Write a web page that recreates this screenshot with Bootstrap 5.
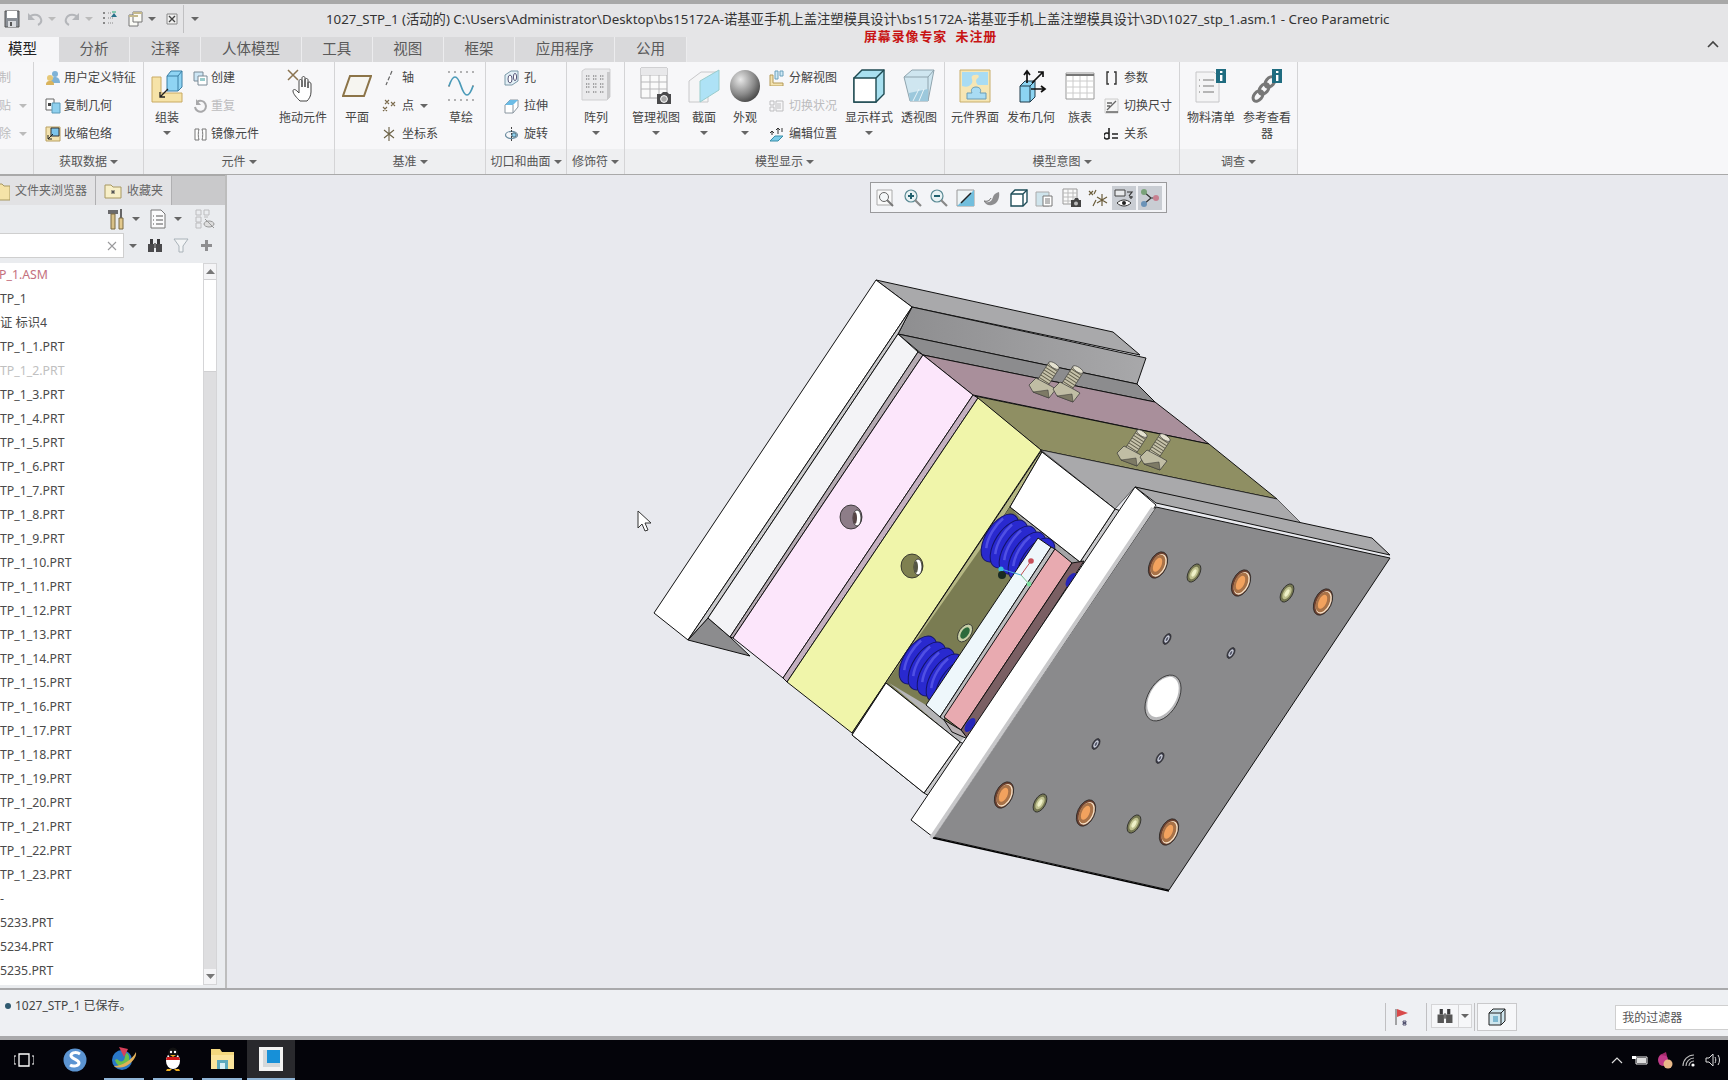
<!doctype html>
<html lang="zh-CN">
<head>
<meta charset="utf-8">
<title>Creo Parametric</title>
<link href="https://cdn.jsdelivr.net/npm/bootstrap@5.3.0/dist/css/bootstrap.min.css" rel="stylesheet">
<style>
html,body{height:1080px;margin:0;overflow:hidden}
body.crapp{width:1728px;font-family:"Noto Sans","Noto Sans CJK SC",sans-serif;font-size:12px;line-height:16px;color:#444;background:#e8e9ee}
svg{display:block;flex:none}
.stripe{height:4px;background:#a8a8a8}
.ttlbar{height:33px;background:#e5e5e7;padding-bottom:4px}
.qat{width:205px;padding-left:4px}
.ttltxt{margin-left:121px;font-size:13.3px;color:#333;white-space:nowrap}
.wmark{position:absolute;left:864px;top:28px;color:#c81414;font-weight:700;font-size:13px;line-height:16px;white-space:pre;z-index:3;letter-spacing:.85px}
.crt{display:inline-block;width:0;height:0;border-left:4px solid transparent;border-right:4px solid transparent;border-top:4px solid #666;flex:none}
.crt.lite{border-top-color:#bbb}
.tabrow{height:25px;background:#e5e5e7;position:relative}
.tabrow .nav-link{height:25px;padding:0 20.6px;font-size:14.5px;line-height:23px;color:#5a5a5a;background:#d9d9db;border-right:1px solid #ececee;border-radius:0}
.tabrow .nav-link.active{background:#f6f6f8;color:#222;padding:0 22px 0 8px;border-right:0}
.collapse-ch{position:absolute;right:9px;top:3px}
.ribbon{height:113px;background:#f7f7f9;border-bottom:1px solid #a9a9a9}
.rgrp{display:flex;flex-direction:column;border-right:1px solid #d4d4d6;height:112px;flex:none;overflow:hidden}
.rbody{height:87px;display:flex;align-items:flex-start}
.rfoot{height:25px;background:#eeeff1;text-align:center;line-height:25px;color:#555;display:flex;align-items:center;justify-content:center;gap:3px;white-space:nowrap}
.g0{width:34px}.g1{width:110px}.g2{width:191px}.g3{width:151px}.g4{width:81px}.g5{width:58px}.g6{width:320px}.g7{width:235px}.g8{width:118px}
.pl11{padding-left:11px}.pl18{padding-left:18px}
.bbtn{height:87px;padding-top:4px;display:flex;flex-direction:column;align-items:center;text-align:center;flex:none}
.bico{height:39px;display:flex;align-items:center;justify-content:center;width:100%}
.blab{margin-top:5px;line-height:16px;color:#444}
.bbtn .crt{margin-top:5px}
.wd34{width:34px}.wd44{width:44px}.wd46{width:46px}.wd48{width:48px}.wd50{width:50px}.wd52{width:52px}.wd56{width:56px}.wd58{width:58px}.wd60{width:60px}.wd62{width:62px}
.scol{display:flex;flex-direction:column;flex:none;padding-top:2px}
.srow{height:28px;display:flex;align-items:center;gap:3px;white-space:nowrap;color:#444}
.srow.off{color:#bcbcbe}
.gp5{gap:5px}.gp6{gap:6px}
.cw81{width:81px;margin-left:3px}.cw57{width:57px;margin-left:3px}.cw72{width:72px}.cw60{width:60px;margin-left:1px}.cw30{width:33px;margin-left:-1px}
.mainrow{height:813px}
.lpanel{width:227px;background:#eaecef;border-right:2px solid #bdbdbd;flex:none;display:flex;flex-direction:column}
.ptabs{height:30px;background:#c9c9cb;border-top:1px solid #a9a9a9}
.ptab{height:29px;background:#e2e2e4;border-right:1px solid #b0b0b2;display:flex;align-items:center;gap:5px;white-space:nowrap;color:#666}
.ptab.a{width:96px;justify-content:flex-end;padding-right:8px}
.ptab.b{width:76px;padding-left:8px}
.ptool{height:28px;padding-right:10px}
.psrch{height:30px;padding-bottom:5px}
.srchbox{width:124px;height:25px;background:#fff;border:1px solid #cfcfcf;border-left:0;display:flex;align-items:center;justify-content:flex-end;padding-right:6px;border-radius:0}
.ms5{margin-left:5px}.ms7{margin-left:7px}.ms8{margin-left:8px}.ms9{margin-left:9px}.ms10{margin-left:10px}.ms12{margin-left:12px}.ms13{margin-left:13px}
.plist{height:722px;margin-right:10px}
.tree{width:203px;background:#fff;overflow:hidden;flex:none;border-radius:0}
.tree .list-group-item{padding:0;border:0;background:transparent;font-size:12.3px;line-height:24px;height:24px;color:#4a4a4a;white-space:nowrap;border-radius:0}
.tree .list-group-item.rd{color:#c4707e;margin-left:-1px}
.tree .list-group-item.dim{color:#c0c0c0}
.sbar{width:14px;flex:none;display:flex;flex-direction:column;border:1px solid #d5d5d7;background:#dedee0}
.sbtn{height:15px;background:#f4f4f6;display:flex;align-items:center;justify-content:center;flex:none}
.sthumb{height:93px;background:#fff;border-top:1px solid #d0d0d2;border-bottom:1px solid #d0d0d2;flex:none}
.cvs{flex:1 1 auto;position:relative;background:#e8e9ee;overflow:hidden}
.ftool{position:absolute;left:643px;top:7px;width:297px;height:31px;background:#f3f4f7;border:1px solid #9a9a9c;display:flex;align-items:center;padding-left:2px}
.fbtn{width:26.5px;height:24px;display:flex;align-items:center;justify-content:center;flex:none}
.fbtn.on{background:#c9cdd3;width:24px;margin-right:2.5px}
.stbar{height:48px;background:#eef0f3;border-top:2px solid #a9a9ab;padding-top:8px}
.stmsg{padding-left:5px;gap:4px;width:1387px;height:32px;color:#444;white-space:nowrap;margin-top:-8px;align-self:flex-start}
.stdot{width:6px;height:6px;background:#2f5a70;border-radius:50%}
.stsep{width:1px;height:28px;background:#c0c0c2;flex:none}
.flag{width:40px;padding-left:9px;height:30px}
.bnbox{width:41px;height:24px;border:1px solid #d5d5d7;background:#f6f7f9;margin:0 2px 3px 4px;display:flex;align-items:center}
.bnl{width:27px;border-right:1px solid #d5d5d7;height:22px;display:flex;align-items:center;justify-content:center}
.bnr{width:12px;display:flex;justify-content:center}
.cubebox{width:40px;height:28px;border:1px solid #c9c9cb;background:#f6f7f9;margin-left:2px;display:flex;align-items:center;justify-content:center}
.fltbox{width:113px;height:25px;background:#fff;border:1px solid #cfcfcf;border-right:0;margin-left:98px;padding-left:6px;line-height:23px;color:#555;border-radius:0}
.ggap{height:4px;background:#a9a9ab}
.taskb{height:40px;background:#04040a}
.tki{height:40px;width:40px;display:flex;align-items:center;justify-content:center;flex:none}
.tki.u{border-bottom:2px solid #8fb4d6}
.tki.wide{width:48px}
.tki.act{background:#29292d;border-bottom:2px solid #8fb4d6;width:48px}
.tray{gap:9px;padding-right:7px}
</style>
</head>
<body class="crapp d-flex flex-column position-relative">
<div class="stripe"></div>
<div class="ttlbar d-flex align-items-center">
  <div class="qat d-flex align-items-center">
    <svg width="16" height="18" viewBox="0 0 16 18"><path d="M1 1h14v16H1z" fill="#8a8f96" stroke="#555"/><path d="M3 1h10v7H3z" fill="#fff"/><path d="M4 11h8v6H4z" fill="#d8dade"/><path d="M6 12h2v4H6z" fill="#555"/></svg>
    <svg class="ms7" width="16" height="14" viewBox="0 0 16 14"><path d="M2 6c2-4 10-5 12 1 1 3-1 5-3 6" fill="none" stroke="#b4b6ba" stroke-width="2"/><path d="M1 1v7h7z" fill="#b4b6ba"/></svg>
    <span class="crt lite ms5"></span>
    <svg class="ms8" width="16" height="14" viewBox="0 0 16 14"><path d="M14 6c-2-4-10-5-12 1-1 3 1 5 3 6" fill="none" stroke="#b4b6ba" stroke-width="2"/><path d="M15 1v7H8z" fill="#b4b6ba"/></svg>
    <span class="crt lite ms5"></span>
    <svg class="ms9" width="16" height="18" viewBox="0 0 16 18"><path d="M1 3h3M1 8h3M1 13h3" stroke="#888" stroke-width="2" stroke-dasharray="2 1"/><path d="M6 3h4M6 8h6M6 13h6" stroke="#888" stroke-dasharray="1 1"/><path d="M9 7l3-4 3 4z" fill="#27708a"/><path d="M10 2h4" stroke="#2a7"/></svg>
    <svg class="ms10" width="15" height="16" viewBox="0 0 15 16"><path d="M1 4h9v11H1z" fill="#fbfbf6" stroke="#777"/><path d="M5 1h9v10H5z" fill="#fbfbf6" stroke="#777"/><path d="M5 1h9v2H5zM1 4h9v2H1z" fill="#c5b98c"/></svg>
    <span class="crt ms5"></span>
    <svg class="ms10" width="12" height="13" viewBox="0 0 12 13"><path d="M1 2h10v10H1z" fill="#f1f1f1" stroke="#888"/><path d="M3 4l6 6M9 4l-6 6" stroke="#444" stroke-width="1.4"/></svg>
    <div class="stsep ms5"></div>
    <span class="crt ms7"></span>
  </div>
  <div class="ttltxt">1027_STP_1 (活动的) C:\Users\Administrator\Desktop\bs15172A-诺基亚手机上盖注塑模具设计\bs15172A-诺基亚手机上盖注塑模具设计\3D\1027_stp_1.asm.1 - Creo Parametric</div>
</div>
<div class="wmark">屏幕录像专家  未注册</div>
<div class="tabrow">
  <ul class="nav">
    <li class="nav-item"><a class="nav-link active" href="#">模型</a></li>
    <li class="nav-item"><a class="nav-link" href="#">分析</a></li>
    <li class="nav-item"><a class="nav-link" href="#">注释</a></li>
    <li class="nav-item"><a class="nav-link" href="#">人体模型</a></li>
    <li class="nav-item"><a class="nav-link" href="#">工具</a></li>
    <li class="nav-item"><a class="nav-link" href="#">视图</a></li>
    <li class="nav-item"><a class="nav-link" href="#">框架</a></li>
    <li class="nav-item"><a class="nav-link" href="#">应用程序</a></li>
    <li class="nav-item"><a class="nav-link" href="#">公用</a></li>
  </ul>
  <svg class="collapse-ch" width="12" height="8" viewBox="0 0 12 8"><path d="M1 7l5-5 5 5" fill="none" stroke="#444" stroke-width="1.6"/></svg>
</div>
<div class="ribbon d-flex">
  <div class="rgrp g0">
    <div class="rbody"><div class="cw30 scol">
      <div class="srow off">制</div>
      <div class="srow off">贴 <span class="crt lite ms5"></span></div>
      <div class="srow off">除 <span class="crt lite ms5"></span></div>
    </div></div>
    <div class="rfoot"></div>
  </div>
  <div class="rgrp g1">
    <div class="rbody pl11"><div class="scol">
      <div class="srow"><svg width="16" height="16" viewBox="0 0 16 16"><circle cx="10" cy="4" r="3" fill="#7fb2d6"/><path d="M5 13c0-4 2-6 5-6s5 2 5 6z" fill="#7fb2d6"/><circle cx="5" cy="8" r="3" fill="#e6c878"/><path d="M1 15c0-3 1-4 4-4s4 1 4 4z" fill="#d9b35c"/></svg>用户定义特征</div>
      <div class="srow"><svg width="16" height="16" viewBox="0 0 16 16"><path d="M1 1h8v11H1z" fill="#fff" stroke="#666"/><path d="M7 5h8v10H7z" fill="#8fd0ee" stroke="#5a9ab8"/><path d="M3 5h3v3H3z" fill="#444"/></svg>复制几何</div>
      <div class="srow"><svg width="16" height="16" viewBox="0 0 16 16"><path d="M1 1h14v14H1z" fill="#f3e3b0" stroke="#b9a060"/><path d="M6 2h8v8H6z" fill="#7cc4ea" stroke="#333"/><path d="M3 13l5-5M3 9v4h4" stroke="#222" fill="none"/></svg>收缩包络</div>
    </div></div>
    <div class="rfoot">获取数据<span class="crt"></span></div>
  </div>
  <div class="rgrp g2">
    <div class="rbody">
      <div class="bbtn wd46"><div class="bico"><svg width="34" height="36" viewBox="0 0 34 36"><path d="M2 9h9v16h21v9H2z" fill="#f6e3a8" stroke="#c9aa62"/><path d="M17 8l4-5h11v16l-4 4H17z" fill="#8fd4f4" stroke="#3b7ea4"/><path d="M17 8h11v15M28 8l4-5" fill="none" stroke="#3b7ea4"/><path d="M18 21l-8 8M10 24v5h5" fill="none" stroke="#222" stroke-width="1.3"/></svg></div><div class="blab">组装</div><span class="crt"></span></div>
      <div class="scol cw81">
        <div class="srow"><svg width="15" height="15" viewBox="0 0 15 15"><path d="M1 1h9v9H1z" fill="#cde6f5" stroke="#7a8a96"/><path d="M5 5h9v9H5z" fill="#fff" stroke="#7a8a96"/><path d="M7 7h5v3H7z" fill="#9cc"/></svg>创建</div>
        <div class="srow off"><svg width="15" height="15" viewBox="0 0 15 15"><path d="M4 3a5.5 5.5 0 1 1-2 5" fill="none" stroke="#a8a8aa" stroke-width="2"/><path d="M3 0v6h5z" fill="#a8a8aa"/></svg>重复</div>
        <div class="srow"><svg width="15" height="15" viewBox="0 0 15 15"><path d="M6 2H2v11h4c-1-3-1-8 0-11zM9 2h4v11H9c1-3 1-8 0-11z" fill="#fff" stroke="#777"/></svg>镜像元件</div>
      </div>
      <div class="bbtn wd58"><div class="bico"><svg width="32" height="36" viewBox="0 0 32 36"><path d="M1 2l10 10M11 2L1 12" stroke="#8a7350" stroke-width="1.5"/><path d="M13 33c-3-3-7-7-7-10 0-2 2-2 4 0l2 2V13c0-2 3-2 3 0v6-9c0-2 3-2 3 0v9-7c0-2 3-2 3 0v8-5c0-2 3-1 3 1v8c0 4-2 7-4 9z" fill="#fff" stroke="#444"/></svg></div><div class="blab">拖动元件</div></div>
    </div>
    <div class="rfoot">元件<span class="crt"></span></div>
  </div>
  <div class="rgrp g3">
    <div class="rbody">
      <div class="bbtn wd44"><div class="bico"><svg width="30" height="22" viewBox="0 0 30 22"><path d="M8 1h21l-7 20H1z" fill="#f6f5f0" stroke="#8c7448" stroke-width="2"/></svg></div><div class="blab">平面</div></div>
      <div class="scol cw57">
        <div class="srow gp6"><svg width="14" height="16" viewBox="0 0 14 16"><path d="M10 1L4 15" stroke="#666" stroke-width="1.2" stroke-dasharray="4 2"/></svg>轴</div>
        <div class="srow gp6"><svg width="14" height="16" viewBox="0 0 14 16"><path d="M3 2l4 4M7 2L3 6M9 4l4 4M13 4l-4 4M1 9l4 4M5 9l-4 4" stroke="#7a6a4c" stroke-width="1.1"/></svg>点<span class="crt"></span></div>
        <div class="srow gp6"><svg width="14" height="16" viewBox="0 0 14 16"><path d="M7 1v14M2 4l10 8M12 4L2 12" stroke="#6a6044" stroke-width="1.1"/></svg>坐标系</div>
      </div>
      <div class="bbtn wd44"><div class="bico"><svg width="28" height="32" viewBox="0 0 28 32"><path d="M2 2h0M8 2h0M14 2h0M20 2h0M26 2h0M2 30h0M8 30h0M14 30h0M20 30h0M26 30h0M2 16h0M26 16h0" stroke="#555" stroke-width="1.6" stroke-linecap="round"/><path d="M2 16C6 4 10 4 14 16s8 12 12 0" fill="none" stroke="#4a9ab8" stroke-width="1.7"/></svg></div><div class="blab">草绘</div></div>
    </div>
    <div class="rfoot">基准<span class="crt"></span></div>
  </div>
  <div class="rgrp g4">
    <div class="rbody pl18"><div class="scol">
      <div class="srow gp5"><svg width="15" height="16" viewBox="0 0 15 16"><path d="M1 5l6-4h7v10l-6 4H1z" fill="#e3f0f6" stroke="#7a98a8"/><ellipse cx="6" cy="9" rx="2" ry="4" fill="#fff" stroke="#557"/><ellipse cx="11" cy="7" rx="1.6" ry="3.6" fill="#fff" stroke="#557"/></svg>孔</div>
      <div class="srow gp5"><svg width="15" height="16" viewBox="0 0 15 16"><path d="M1 7l5-5h8v7l-5 6H1z" fill="#fff" stroke="#8a96a0"/><path d="M6 2h8l-5 5H1z" fill="#6cbce6"/><path d="M9 7v8" stroke="#8a96a0"/></svg>拉伸</div>
      <div class="srow gp5"><svg width="15" height="16" viewBox="0 0 15 16"><ellipse cx="7.5" cy="9" rx="6" ry="3.6" fill="none" stroke="#6a8ca0" stroke-width="1.2"/><path d="M7.5 1v14" stroke="#444" stroke-dasharray="2 1"/><circle cx="10" cy="9" r="2.2" fill="#8fd0ee" stroke="#467"/></svg>旋转</div>
    </div></div>
    <div class="rfoot">切口和曲面<span class="crt"></span></div>
  </div>
  <div class="rgrp g5">
    <div class="rbody"><div class="bbtn wd58"><div class="bico"><svg width="30" height="36" viewBox="0 0 30 36"><path d="M1 3l3-2h25v28l-3 3H1z" fill="#eaeaec" stroke="#cfcfd1"/><path d="M26 4h3v25l-3 3z" fill="#c8c8ca"/><path d="M5 8h4M12 8h4M19 8h4M5 11h4M12 11h4M19 11h4M5 16h4M12 16h4M19 16h4M5 19h4M12 19h4M19 19h4M5 24h4M12 24h4M19 24h4" stroke="#8a8a8c" stroke-width="1.4" stroke-dasharray="1 .8"/></svg></div><div class="blab">阵列</div><span class="crt"></span></div></div>
    <div class="rfoot">修饰符<span class="crt"></span></div>
  </div>
  <div class="rgrp g6">
    <div class="rbody">
      <div class="bbtn wd62"><div class="bico"><svg width="32" height="38" viewBox="0 0 32 38"><path d="M1 1h26v30H1z" fill="#fafafa" stroke="#a8a8aa"/><path d="M1 8h26M1 15h26M1 22h26M10 8v23M19 8v23" stroke="#b8b8ba"/><path d="M1 1h26v7H1z" fill="#e8e8ea"/><path d="M17 27h4l2-2h4l2 2h2v10H17z" fill="#4a4a4c"/><circle cx="24" cy="32" r="3.4" fill="#aaa" stroke="#fff"/></svg></div><div class="blab">管理视图</div><span class="crt"></span></div>
      <div class="bbtn wd34"><div class="bico"><svg width="32" height="34" viewBox="0 0 32 34"><path d="M1 12L13 3h18L20 12v21H1z" fill="#f5f5f6" stroke="#c8c8ca"/><path d="M12 12L31 1v20L12 33z" fill="#aee2f6" stroke="#9cc"/></svg></div><div class="blab">截面</div><span class="crt"></span></div>
      <div class="bbtn wd48"><div class="bico"><svg width="32" height="34" viewBox="0 0 32 34"><defs><radialGradient id="sph" cx=".35" cy=".3" r=".85"><stop offset="0" stop-color="#e8e8e8"/><stop offset=".55" stop-color="#8a8a8a"/><stop offset="1" stop-color="#2e2e2e"/></radialGradient></defs><ellipse cx="16" cy="17" rx="15" ry="16" fill="url(#sph)"/></svg></div><div class="blab">外观</div><span class="crt"></span></div>
      <div class="scol cw72">
        <div class="srow gp5"><svg width="15" height="16" viewBox="0 0 15 16"><path d="M1 5h3v8h10v3H1z" fill="#f3e3b0" stroke="#b59a58"/><path d="M6 1h3v8H6zM11 1h3v5h-3z" fill="#cfe9f6" stroke="#6aa0bc"/></svg>分解视图</div>
        <div class="srow off gp5"><svg width="15" height="16" viewBox="0 0 15 16"><path d="M1 3h4v4H1zM1 9h4v4H1zM7 3h7v10H7z" fill="none" stroke="#bdbdbf"/><path d="M9 5v6M11 5v6" stroke="#bdbdbf"/></svg>切换状况</div>
        <div class="srow gp5"><svg width="15" height="16" viewBox="0 0 15 16"><path d="M1 15l5-5h8l-5 5z" fill="#7ccce8" stroke="#3a8ea8"/><path d="M3 9V5M1 7l2-2 2 2M9 8V2M7 4l2-2 2 2M13 6V2" fill="none" stroke="#333"/></svg>编辑位置</div>
      </div>
      <div class="bbtn wd56"><div class="bico"><svg width="32" height="34" viewBox="0 0 32 34"><path d="M1 9l8-8h22v24l-8 8H1z" fill="#a8e0f0" stroke="#1e4a52" stroke-width="1.4"/><path d="M1 9h22v24H1z" fill="#fff" stroke="#1e4a52" stroke-width="1.4"/><path d="M23 9l8-8" stroke="#1e4a52" stroke-width="1.4"/></svg></div><div class="blab">显示样式</div><span class="crt"></span></div>
      <div class="bbtn wd44"><div class="bico"><svg width="32" height="34" viewBox="0 0 32 34"><path d="M1 8l8-7h22l-6 31H7z" fill="#cfe6f0" stroke="#8fa4ae"/><path d="M1 8h24l6-7M25 8v24" fill="none" stroke="#8fa4ae"/><path d="M6 24l19-4v12H7z" fill="#9cc8dc"/><path d="M10 32l6-12M16 32l5-12" stroke="#e8f4f8"/></svg></div><div class="blab">透视图</div></div>
    </div>
    <div class="rfoot">模型显示<span class="crt"></span></div>
  </div>
  <div class="rgrp g7">
    <div class="rbody">
      <div class="bbtn wd60"><div class="bico"><svg width="32" height="34" viewBox="0 0 32 34"><path d="M1 1h30v32H1z" fill="#f6e6b4" stroke="#c8ae6c"/><path d="M3 3h26v13H19c-3-3-2-6 0-7 2-2 0-4-3-3-3 0-4 2-3 4 1 3 0 5-3 7-2 1-4 1-7 0z" fill="#a9dcf3"/><path d="M13 24c-2-4 1-6 4-6s6 2 4 6h6v6H8v-6z" fill="#a9dcf3" stroke="#6a9cb4"/></svg></div><div class="blab">元件界面</div></div>
      <div class="bbtn wd52"><div class="bico"><svg width="32" height="34" viewBox="0 0 32 34"><path d="M5 17l5-5h10v16l-5 5H5z" fill="#8cd4f2" stroke="#1e3a4a"/><path d="M5 17h10v16M15 17l5-5" fill="none" stroke="#1e3a4a"/><path d="M12 14V2M9 6l3-4 3 4M16 20h14M26 17l4 3-4 3M17 14l11-11M23 3h5v5" fill="none" stroke="#111" stroke-width="1.7"/></svg></div><div class="blab">发布几何</div></div>
      <div class="bbtn wd46"><div class="bico"><svg width="30" height="28" viewBox="0 0 30 28"><path d="M1 1h28v26H1z" fill="#fff" stroke="#999"/><path d="M1 3h28" stroke="#777" stroke-width="2"/><path d="M1 9h28M1 15h28M1 21h28M8 4v23M15 4v23M22 4v23" stroke="#ccc"/></svg></div><div class="blab">族表</div></div>
      <div class="scol cw60">
        <div class="srow gp5"><svg width="15" height="16" viewBox="0 0 15 16"><path d="M5 2H3v12h2M10 2h2v12h-2" fill="none" stroke="#333" stroke-width="1.4"/></svg>参数</div>
        <div class="srow gp5"><svg width="15" height="16" viewBox="0 0 15 16"><path d="M1 1h13v14H1z" fill="#f5f5f5" stroke="#ccc"/><path d="M3 12L12 3M2 14h12M3 5h5M3 8h3" stroke="#666" stroke-width="1.3"/></svg>切换尺寸</div>
        <div class="srow gp5"><svg width="15" height="16" viewBox="0 0 15 16"><path d="M5 2v11M5 8a3 3 0 1 0 0 4M8 8h6M8 12h6" fill="none" stroke="#222" stroke-width="1.6"/></svg>关系</div>
      </div>
    </div>
    <div class="rfoot">模型意图<span class="crt"></span></div>
  </div>
  <div class="rgrp g8">
    <div class="rbody">
      <div class="bbtn wd62"><div class="bico"><svg width="32" height="34" viewBox="0 0 32 34"><path d="M1 3h18l5 5v25H1z" fill="#f4f4f5" stroke="#c6c6c8"/><path d="M4 11h1M4 17h1M4 23h1M8 11h11M8 17h11M8 23h11" stroke="#777" stroke-width="1.2"/><path d="M21 0h10v14H21z" fill="#1f6c80"/><path d="M25 2h2.4v2H25zM25 6h2.4v6H25z" fill="#fff"/></svg></div><div class="blab">物料清单</div></div>
      <div class="bbtn wd50"><div class="bico"><svg width="32" height="34" viewBox="0 0 32 34"><g fill="none" stroke="#777" stroke-width="3"><ellipse cx="7" cy="27" rx="4" ry="6" transform="rotate(40 7 27)"/><ellipse cx="13" cy="20" rx="4" ry="6" transform="rotate(40 13 20)"/><ellipse cx="19" cy="13" rx="4" ry="6" transform="rotate(40 19 13)"/></g><path d="M21 0h10v14H21z" fill="#1f6c80"/><path d="M25 2h2.4v2H25zM25 6h2.4v6H25z" fill="#fff"/></svg></div><div class="blab">参考查看器</div></div>
    </div>
    <div class="rfoot">调查<span class="crt"></span></div>
  </div>
</div>
<div class="mainrow d-flex">
  <div class="lpanel">
    <div class="ptabs d-flex">
      <div class="ptab a"><svg width="12" height="20" viewBox="0 0 12 20"><path d="M-6 3h10l2 2h6v14H-6z" fill="#f5e3a8" stroke="#a89860"/></svg>文件夹浏览器</div>
      <div class="ptab b"><svg width="18" height="17" viewBox="0 0 18 17"><path d="M1 3h6l2 2h8v11H1z" fill="#f7efc8" stroke="#a89860"/><path d="M7 10h4M9 8v4M7.5 8.5l3 3M10.5 8.5l-3 3" stroke="#555"/></svg>收藏夹</div>
    </div>
    <div class="ptool d-flex align-items-center justify-content-end">
      <svg width="18" height="22" viewBox="0 0 18 22"><path d="M1 2h10v4H1z" fill="#6a6a6c"/><path d="M4 6h4v15H4z" fill="#d8c088" stroke="#7a6a44"/><path d="M14 1v9" stroke="#444" stroke-width="1.6"/><path d="M12 10h4v11h-4z" fill="#e3c98c" stroke="#7a6a44"/></svg>
      <span class="crt ms7"></span>
      <svg class="ms10" width="16" height="20" viewBox="0 0 16 20"><path d="M1 1h10l4 4v14H1z" fill="#fbfbfc" stroke="#777"/><path d="M3 7h1M3 11h1M3 15h1M6 7h7M6 11h7M6 15h7" stroke="#555"/></svg>
      <span class="crt ms8"></span>
      <svg class="ms13" width="20" height="20" viewBox="0 0 20 20"><path d="M1 1h5v5H1zM1 8h5v5H1zM1 14h5v5H1zM9 1h5v5H9zM9 8h4" fill="none" stroke="#bcbcbe"/><ellipse cx="14" cy="15" rx="5" ry="3" fill="#ddd" stroke="#999"/><path d="M10 10l9 9" stroke="#999"/></svg>
    </div>
    <div class="psrch d-flex align-items-center">
      <div class="srchbox"><svg width="10" height="10" viewBox="0 0 10 10"><path d="M1 1l8 8M9 1L1 9" stroke="#9a9a9c" stroke-width="1.1"/></svg></div>
      <span class="crt ms5"></span>
      <svg class="ms10" width="16" height="15" viewBox="0 0 16 15"><path d="M3 1h3v5H3zM10 1h3v5h-3z" fill="#3a3a3c"/><path d="M1 6h6v8H1zM9 6h6v8H9z" fill="#4a4a4c"/><path d="M7 5h2v5H7z" fill="#777"/></svg>
      <svg class="ms10" width="16" height="15" viewBox="0 0 16 15"><path d="M1 1h14l-5 7v6H6V8z" fill="#f2f4f5" stroke="#a9b2b8"/></svg>
      <svg class="ms12" width="11" height="11" viewBox="0 0 11 11"><path d="M4 0h3v4h4v3H7v4H4V7H0V4h4z" fill="#8e8e90"/></svg>
    </div>
    <div class="plist d-flex">
      <ul class="tree list-group list-group-flush">
        <li class="list-group-item rd">P_1.ASM</li>
        <li class="list-group-item">TP_1</li>
        <li class="list-group-item">证 标识4</li>
        <li class="list-group-item">TP_1_1.PRT</li>
        <li class="list-group-item dim">TP_1_2.PRT</li>
        <li class="list-group-item">TP_1_3.PRT</li>
        <li class="list-group-item">TP_1_4.PRT</li>
        <li class="list-group-item">TP_1_5.PRT</li>
        <li class="list-group-item">TP_1_6.PRT</li>
        <li class="list-group-item">TP_1_7.PRT</li>
        <li class="list-group-item">TP_1_8.PRT</li>
        <li class="list-group-item">TP_1_9.PRT</li>
        <li class="list-group-item">TP_1_10.PRT</li>
        <li class="list-group-item">TP_1_11.PRT</li>
        <li class="list-group-item">TP_1_12.PRT</li>
        <li class="list-group-item">TP_1_13.PRT</li>
        <li class="list-group-item">TP_1_14.PRT</li>
        <li class="list-group-item">TP_1_15.PRT</li>
        <li class="list-group-item">TP_1_16.PRT</li>
        <li class="list-group-item">TP_1_17.PRT</li>
        <li class="list-group-item">TP_1_18.PRT</li>
        <li class="list-group-item">TP_1_19.PRT</li>
        <li class="list-group-item">TP_1_20.PRT</li>
        <li class="list-group-item">TP_1_21.PRT</li>
        <li class="list-group-item">TP_1_22.PRT</li>
        <li class="list-group-item">TP_1_23.PRT</li>
        <li class="list-group-item">-</li>
        <li class="list-group-item">5233.PRT</li>
        <li class="list-group-item">5234.PRT</li>
        <li class="list-group-item">5235.PRT</li>
      </ul>
      <div class="sbar">
        <div class="sbtn"><svg width="9" height="5" viewBox="0 0 9 5"><path d="M4.5 0L9 5H0z" fill="#777"/></svg></div>
        <div class="sthumb"></div>
        <div class="flex-grow-1"></div>
        <div class="sbtn"><svg width="9" height="5" viewBox="0 0 9 5"><path d="M4.5 5L9 0H0z" fill="#777"/></svg></div>
      </div>
    </div>
  </div>
  <div class="cvs">
    <svg width="1501" height="813" viewBox="227 175 1501 813">
      <defs>
        <linearGradient id="gb" x1="0" y1="0" x2="1" y2="0"><stop offset="0" stop-color="#8e8e90"/><stop offset="1" stop-color="#a8a8aa"/></linearGradient>
        <g id="hO"><ellipse rx="8.5" ry="14" fill="#6e4230" stroke="#222" stroke-width=".7"/><ellipse cx=".8" rx="7" ry="12" fill="#f6e2c8"/><ellipse rx="6.4" ry="11" fill="#a87248"/><ellipse cx="-.5" rx="3.8" ry="7.5" fill="#f2a25e"/></g>
        <g id="hL"><ellipse rx="5.5" ry="10" fill="#767852" stroke="#222" stroke-width=".7"/><ellipse rx="3.6" ry="7" fill="#c0c290"/><ellipse rx="1.8" ry="4" fill="#eef0c8"/></g>
        <g id="hT"><ellipse rx="3.2" ry="6" fill="#3a3a46" stroke="#222" stroke-width=".5"/><ellipse rx="1.9" ry="4" fill="#c8ccd8"/><ellipse rx=".9" ry="2.2" fill="#55586a"/></g>
        <g id="spr"><ellipse rx="14" ry="27" fill="#2929cf" stroke="#14146a" stroke-width="1"/><path d="M-8 -18c-3 10-3 24 2 34" fill="none" stroke="#5050e4" stroke-width="2.5"/></g>
        <g id="blt"><g transform="rotate(33)"><rect x="-6" y="-22" width="12" height="22" fill="#c6c2aa" stroke="#333" stroke-width=".6"/><path d="M-6-19h12M-6-16h12M-6-13h12M-6-10h12M-6-7h12M-6-4h12" stroke="#5f5c4a"/><ellipse cy="-22" rx="6" ry="2.4" fill="#e4e1cf" stroke="#333" stroke-width=".6"/></g><path d="M-13 1L-6-6 9 2 14 5 7 14-9 8z" fill="#c0bda4" stroke="#333" stroke-width=".7"/><path d="M-9 8L6 6 7 14z" fill="#7d7a65" stroke="#333" stroke-width=".5"/></g>
      </defs>
      <g stroke="#111" stroke-width="1" stroke-linejoin="round">
        <polygon points="876,280 1113,332 1140,355 912,307" fill="#a9a9ab"/>
        <polygon points="912,307 1146,358 1137,384 898,334" fill="url(#gb)"/>
        <polygon points="898,334 1137,384 1155,402 923,355" fill="#8c8c8e"/>
        <polygon points="923,355 1155,402 1209,444 973,395" fill="#a98f9b"/>
        <polygon points="975,396 1209,444 1277,499 1041,450" fill="#8f8f63"/>
        <polygon points="1041,450 1277,499 1305,527 1135,487 1115,509" fill="#a9a9ab" stroke-width=".6"/>
        <polygon points="688,640 708,618 730,637 750,656" fill="#8c8c8e"/>
        <polygon points="876,280 912,307 688,640 654,613" fill="#fff"/>
        <polygon points="912,307 898,334 708,618 688,640" fill="#c9c9cb"/>
        <polygon points="898,334 918,352 730,637 708,618" fill="#f3f3f6"/>
        <polygon points="918,352 923,355 733,638 730,637" fill="#b5aab2"/>
        <polygon points="923,355 973,395 783,678 733,638" fill="#fce6fb"/>
        <polygon points="973,395 978,398 787,682 783,678" fill="#c4b0c0"/>
        <polygon points="978,398 1041,450 852,733 787,682" fill="#f0f5aa"/>
        <polygon points="1041,451 1045,454 858,737 852,733" fill="#b5b783"/>
        <polygon points="1010,507 1080,562 960,742 886,683" fill="#7a7c52" stroke="none"/>
        <polygon points="889,683 926,705 965,737 960,742" fill="#b5b5b7" stroke="none"/>
        <polygon points="1013,510 1080,562 1072,563 1038,538" fill="#a5a5a7" stroke="none"/>
        <polygon points="1042,452 1115,509 1080,562 1010,507" fill="#fff"/>
        <polygon points="886,683 960,742 924,793 852,735" fill="#fff"/>
        <polygon points="1115,509 1121,511 1086,564 1080,562" fill="#c8c8ca"/>
        <polygon points="960,742 966,745 929,796 924,793" fill="#c8c8ca"/>
      </g>
      <use href="#spr" transform="translate(1000,538) rotate(33)"/>
      <use href="#spr" transform="translate(1009,544) rotate(33)"/>
      <use href="#spr" transform="translate(1018,550) rotate(33)"/>
      <use href="#spr" transform="translate(1027,556) rotate(33)"/>
      <use href="#spr" transform="translate(1036,562) rotate(33)"/>
      <use href="#spr" transform="translate(918,660) rotate(33)"/>
      <use href="#spr" transform="translate(927,666) rotate(33)"/>
      <use href="#spr" transform="translate(936,672) rotate(33)"/>
      <use href="#spr" transform="translate(945,678) rotate(33)"/>
      <use href="#spr" transform="translate(954,684) rotate(33)"/>
      <g stroke="#111" stroke-width="1" stroke-linejoin="round">
        <polygon points="1038,538 1051,547 940,717 926,705" fill="#eef7fb"/>
        <polygon points="1051,547 1055,549 944,720 940,717" fill="#bbbcbe"/>
        <polygon points="1055,549 1072,563 961,730 944,717" fill="#e8aab0"/>
        <polygon points="1072,563 1084,561 968,739 961,730" fill="#7a5f63"/>
        <polygon points="944,720 961,730 968,739 952,732" fill="#b8b0b2"/>
        <polygon points="1042,452 1115,509 1080,562 1010,507" fill="#fff"/>
        <polygon points="886,683 960,742 924,793 852,735" fill="#fff"/>
      </g>
      <ellipse cx="1071" cy="580" rx="4" ry="8" transform="rotate(33 1071 580)" fill="#2626b8"/>
      <ellipse cx="970" cy="725" rx="4" ry="8" transform="rotate(33 970 725)" fill="#2626b8"/>
      <g fill="none" stroke-width="1"><path d="M1031 561l-10 14" stroke="#c05050"/><path d="M1021 575l8 9" stroke="#7ac090"/><path d="M1001 569l20 6" stroke="#4ab0d8"/></g>
      <circle cx="1031" cy="561" r="2.8" fill="#c8505a"/><circle cx="1001" cy="569" r="2.6" fill="#38bce0"/><circle cx="1029" cy="584" r="2.4" fill="#7ce0a0"/>
      <ellipse cx="1002" cy="575" rx="4" ry="4" fill="#1a2a20"/>
      <g transform="translate(851,517)"><ellipse rx="11" ry="12" fill="#8d7d88" stroke="#222" stroke-width=".8"/><ellipse cx="6" cy="1" rx="4" ry="8" fill="#fff" stroke="#222" stroke-width=".8"/><ellipse cx="4" cy="1" rx="2" ry="6" fill="#544"/></g>
      <g transform="translate(912,566)"><ellipse rx="11" ry="12" fill="#7f8050" stroke="#222" stroke-width=".8"/><ellipse cx="6" cy="1" rx="4" ry="8" fill="#fff" stroke="#222" stroke-width=".8"/><ellipse cx="4" cy="1" rx="2" ry="6" fill="#554"/></g>
      <g transform="translate(965,633) rotate(35)"><ellipse rx="6" ry="10" fill="#c8d0a8" stroke="#222" stroke-width=".7"/><ellipse rx="3.6" ry="6.5" fill="#2c6a3c"/></g>
      <g stroke="#111" stroke-width="1" stroke-linejoin="round">
        <polygon points="1135,487 1372,538 1390,555 1156,503" fill="#a9a9ab"/>
        <polygon points="1135,487 1156,505 933,837 911,820" fill="#fff"/>
        <polygon points="1156,507 1390,558 1169,890 933,837" fill="#8a8a8c"/>
      </g>
      <path d="M1153 508L931 838" fill="none" stroke="#c8c8ca" stroke-width="4"/>
      <path d="M933 838L1169 891" fill="none" stroke="#000" stroke-width="1.4"/>
      <use href="#hO" transform="translate(1158,565) rotate(25)"/>
      <use href="#hO" transform="translate(1241,583) rotate(25)"/>
      <use href="#hO" transform="translate(1323,602) rotate(25)"/>
      <use href="#hO" transform="translate(1004,795) rotate(25)"/>
      <use href="#hO" transform="translate(1086,813) rotate(25)"/>
      <use href="#hO" transform="translate(1169,832) rotate(25)"/>
      <use href="#hL" transform="translate(1194,573) rotate(30)"/>
      <use href="#hL" transform="translate(1287,593) rotate(30)"/>
      <use href="#hL" transform="translate(1040,803) rotate(30)"/>
      <use href="#hL" transform="translate(1134,824) rotate(30)"/>
      <use href="#hT" transform="translate(1167,639) rotate(30)"/>
      <use href="#hT" transform="translate(1231,653) rotate(30)"/>
      <use href="#hT" transform="translate(1096,744) rotate(30)"/>
      <use href="#hT" transform="translate(1160,758) rotate(30)"/>
      <ellipse cx="1163" cy="698" rx="15" ry="25" transform="rotate(30 1163 698)" fill="#b8b8ba" stroke="#222" stroke-width=".7"/>
      <ellipse cx="1163" cy="697" rx="13" ry="22" transform="rotate(30 1163 697)" fill="#fff"/>
      <use href="#blt" transform="translate(1042,384)"/>
      <use href="#blt" transform="translate(1066,388)"/>
      <use href="#blt" transform="translate(1130,452)"/>
      <use href="#blt" transform="translate(1153,456)"/>
      <path d="M638 511v17l4-4 3 7 3-1-3-7h6z" fill="#fff" stroke="#333" stroke-width="1"/>
    </svg>
    <div class="ftool">
      <div class="fbtn"><svg width="20" height="20" viewBox="0 0 20 20"><path d="M1 2h15v15H1z" fill="#fafafa" stroke="#aaa"/><circle cx="8" cy="9" r="4.5" fill="#f4f7f8" stroke="#666"/><path d="M11 12l6 6" stroke="#777" stroke-width="2"/></svg></div>
      <div class="fbtn"><svg width="20" height="20" viewBox="0 0 20 20"><circle cx="8" cy="8" r="6" fill="#e8f2f4" stroke="#5a8a94" stroke-width="1.2"/><path d="M5 8h6M8 5v6" stroke="#20606e" stroke-width="2"/><path d="M12 12l6 6" stroke="#888" stroke-width="2.2"/></svg></div>
      <div class="fbtn"><svg width="20" height="20" viewBox="0 0 20 20"><circle cx="8" cy="8" r="6" fill="#e8f2f4" stroke="#5a8a94" stroke-width="1.2"/><path d="M5 8h6" stroke="#20606e" stroke-width="2"/><path d="M12 12l6 6" stroke="#888" stroke-width="2.2"/></svg></div>
      <div class="fbtn"><svg width="20" height="20" viewBox="0 0 20 20"><path d="M1 2h17v16H1z" fill="#eef4f6" stroke="#999"/><path d="M18 2v16H1L18 2z" fill="#72bedd"/><path d="M5 15L15 5" stroke="#222" stroke-width="1.4"/></svg></div>
      <div class="fbtn"><svg width="20" height="20" viewBox="0 0 20 20"><path d="M2 13c5 3 8 0 9-4 1-3 3-4 6-5 1 5-1 12-7 13-4 1-7-1-8-4z" fill="#8e8e90"/><path d="M2 13c4 1 6-1 7-3" stroke="#555" fill="none"/></svg></div>
      <div class="fbtn"><svg width="20" height="20" viewBox="0 0 20 20"><path d="M2 6l4-4h12v12l-4 4H2z" fill="#fff" stroke="#1d4c58" stroke-width="1.4"/><path d="M2 6h12v12M14 6l4-4" fill="none" stroke="#1d4c58" stroke-width="1.4"/></svg></div>
      <div class="fbtn"><svg width="20" height="20" viewBox="0 0 20 20"><path d="M1 4h13v14H1z" fill="#cfe4ec" stroke="#aaa"/><path d="M8 8h9v10H8z" fill="#fff" stroke="#777"/><path d="M10 11h5M10 13h5M10 15h5" stroke="#777"/></svg></div>
      <div class="fbtn"><svg width="20" height="20" viewBox="0 0 20 20"><path d="M1 1h14v15H1z" fill="#fafafa" stroke="#999"/><path d="M1 5h14M1 9h14M1 13h14M6 1v15M11 1v15" stroke="#bbb"/><path d="M9 12h3l1-2h3l1 2h2v7H9z" fill="#444"/><circle cx="14" cy="15.5" r="2" fill="#bbb"/></svg></div>
      <div class="fbtn"><svg width="20" height="20" viewBox="0 0 20 20"><path d="M1 3l4 4M5 3L1 7M8 2l-2 4M5 18l3-6M14 6v12M9 9l10 6M19 9L9 15" stroke="#6a5c3a" stroke-width="1.2"/></svg></div>
      <div class="fbtn on"><svg width="20" height="20" viewBox="0 0 20 20"><path d="M1 2h10v6H1z" fill="#e8eaec" stroke="#444"/><path d="M13 4h5l-3 4M17 8v3M15 9h4" fill="none" stroke="#333" stroke-width="1.2"/><path d="M3 15c4-4 10-4 14 0-4 4-10 4-14 0z" fill="#fff" stroke="#333"/><circle cx="10" cy="15" r="2" fill="#222"/></svg></div>
      <div class="fbtn on"><svg width="20" height="20" viewBox="0 0 20 20"><path d="M4 4l7 6-7 6M11 10h6" fill="none" stroke="#333" stroke-width="1.2"/><circle cx="4" cy="4" r="3" fill="#7aa27a"/><circle cx="4" cy="16" r="3" fill="#6b93b8"/><circle cx="16" cy="10" r="3" fill="#c88090"/></svg></div>
    </div>
  </div>
</div>
<div class="stbar d-flex align-items-center">
  <div class="stmsg d-flex align-items-center"><span class="stdot"></span>1027_STP_1 已保存。</div>
  <div class="stsep"></div>
  <div class="flag d-flex align-items-center"><svg width="14" height="18" viewBox="0 0 14 18"><path d="M1 1v16" stroke="#555"/><path d="M2 1l11 4-11 4z" fill="#d84a4a"/><path d="M7 12h5v5H7z" fill="#eef0f3"/><path d="M8 13h3v1.5H8zM8 15.5h3V17H8z" fill="none" stroke="#335" stroke-width=".8"/></svg></div>
  <div class="stsep"></div>
  <div class="bnbox">
    <div class="bnl"><svg width="18" height="16" viewBox="0 0 16 15"><path d="M3 1h3v5H3zM10 1h3v5h-3z" fill="#3a3a3c"/><path d="M1 6h6v8H1zM9 6h6v8H9z" fill="#555"/><path d="M7 5h2v5H7z" fill="#777"/></svg></div>
    <div class="bnr"><span class="crt"></span></div>
  </div>
  <div class="stsep"></div>
  <div class="cubebox"><svg width="18" height="18" viewBox="0 0 18 18"><path d="M1 5l4-4h12v12l-4 4H1z" fill="#cfe6ee" stroke="#222"/><path d="M1 5h12v12M13 5l4-4" fill="none" stroke="#222"/><path d="M5 8h5v6H5z" fill="#7fb8d0"/></svg></div>
  <div class="fltbox">我的过滤器</div>
</div>
<div class="ggap"></div>
<div class="taskb d-flex">
  <div class="tki wide"><svg width="20" height="14" viewBox="0 0 20 14"><path d="M5 1h10v12H5z" fill="none" stroke="#fff" stroke-width="1.3"/><path d="M2 3H0v8h2M18 3h2v8h-2" fill="none" stroke="#fff"/></svg></div>
  <div class="tki ms7"><svg width="24" height="24" viewBox="0 0 24 24"><circle cx="12" cy="12" r="11.5" fill="#5b94d2"/><path d="M17 6c-3-2-8-2-9 1-1 4 8 4 8 8 0 3-6 4-9 2" fill="none" stroke="#fff" stroke-width="3"/></svg></div>
  <div class="tki u ms9"><svg width="26" height="26" viewBox="0 0 26 26"><circle cx="11" cy="14" r="10" fill="#2a78c8"/><path d="M4 14c3-3 4 3 8 1 3-2 1-7 4-8 3 2 3 9 0 12-4 3-10 2-12-5z" fill="#6ac04a"/><path d="M8 1l9 2-4 8z" fill="#d8405a"/><path d="M3 20c8 0 18-6 22-14 1 5-4 11-10 14-5 2-10 2-12 0z" fill="#e0b05a"/></svg></div>
  <div class="tki u ms9"><svg width="18" height="24" viewBox="0 0 18 24"><ellipse cx="9" cy="14" rx="7" ry="8" fill="#fff"/><ellipse cx="9" cy="6" rx="5" ry="5.5" fill="#111"/><circle cx="7" cy="5" r="1.2" fill="#fff"/><circle cx="11" cy="5" r="1.2" fill="#fff"/><path d="M3 10h12l1 3H2z" fill="#d01818"/><path d="M6 8h6l-3 2z" fill="#f0b020"/><path d="M3 22h5l-2 2H2zM10 22h5l1 2h-4z" fill="#f0b020"/></svg></div>
  <div class="tki u ms9"><svg width="23" height="20" viewBox="0 0 23 20"><path d="M0 0h9l2 3h12v17H0z" fill="#f3d77e"/><path d="M0 6h23v14H0z" fill="#fbe49c"/><path d="M6 11h11v9H6z" fill="#5ea9bd"/><path d="M9 14h5v6H9z" fill="#d8eef4"/></svg></div>
  <div class="tki act ms5"><svg width="24" height="24" viewBox="0 0 24 24"><path d="M0 0h24v24H0z" fill="#f3f3f3"/><path d="M4 3h17v17H4z" fill="#d4d8da"/><path d="M8 3h13v13H8z" fill="#1790d8"/></svg></div>
  <div class="tray ms-auto d-flex align-items-center">
    <svg width="12" height="8" viewBox="0 0 12 8"><path d="M1 7l5-5 5 5" fill="none" stroke="#ddd" stroke-width="1.2"/></svg>
    <svg width="16" height="12" viewBox="0 0 16 12"><path d="M4 3h11v7H4z" fill="none" stroke="#eee"/><path d="M5 4h9v5H5z" fill="#ddd"/><path d="M0 2h4v3H0z" fill="#fff"/></svg>
    <svg width="16" height="18" viewBox="0 0 16 18"><ellipse cx="6" cy="9" rx="5" ry="6" fill="#c03a88"/><circle cx="11" cy="13" r="4.5" fill="#e8b888"/><path d="M3 4l6-3 1 4z" fill="#a02868"/></svg>
    <svg width="14" height="13" viewBox="0 0 14 13"><path d="M1 12A11 11 0 0 1 12 1M4 12a8 8 0 0 1 8-8M7 12a5 5 0 0 1 5-5" fill="none" stroke="#bbb" stroke-width="1.1"/><circle cx="11" cy="11" r="1.6" fill="#fff"/></svg>
    <svg width="16" height="14" viewBox="0 0 16 14"><path d="M1 5h3l4-4v12L4 9H1z" fill="none" stroke="#ddd"/><path d="M10 4c1 2 1 4 0 6M13 2c2 3 2 7 0 10" fill="none" stroke="#ddd"/></svg>
  </div>
</div>
</body>
</html>
